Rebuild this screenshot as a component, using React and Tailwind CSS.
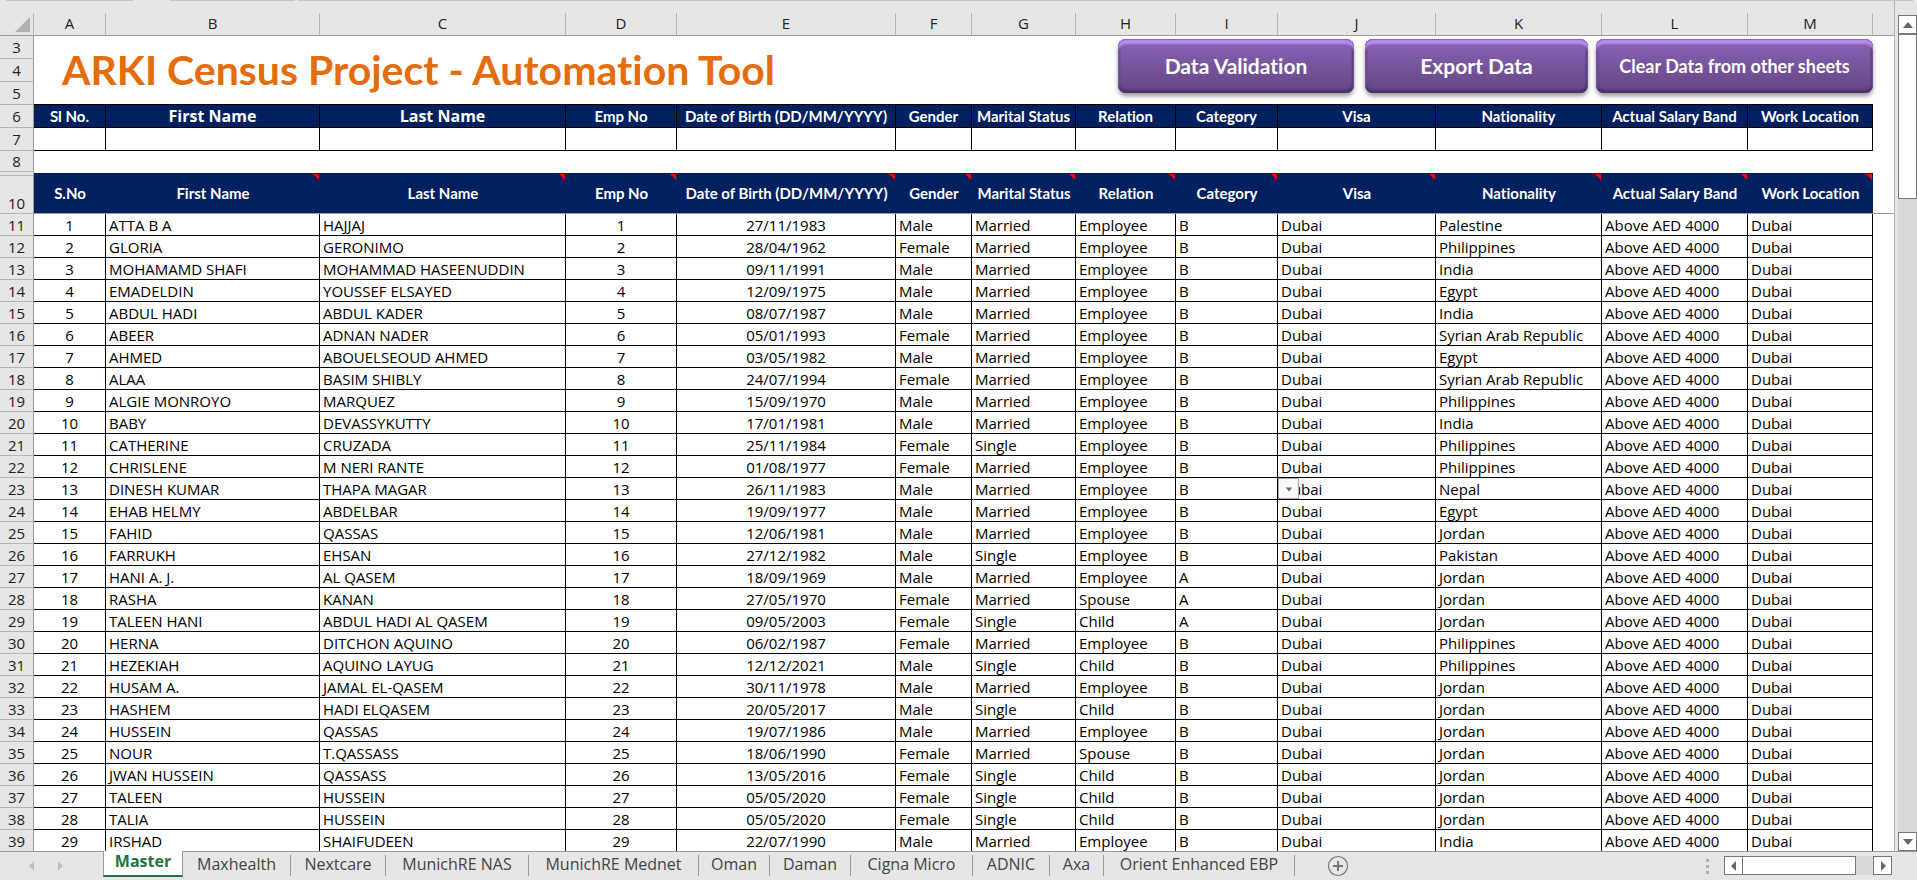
import clsx from "clsx";

const columns = [
  { letter: "A", label: "S.No", width: "w-[72px]" },
  { letter: "B", label: "First Name", width: "w-[214px]" },
  { letter: "C", label: "Last Name", width: "w-[246px]" },
  { letter: "D", label: "Emp No", width: "w-[111px]" },
  { letter: "E", label: "Date of Birth (DD/MM/YYYY)", width: "w-[219px]" },
  { letter: "F", label: "Gender", width: "w-[76px]" },
  { letter: "G", label: "Marital Status", width: "w-[104px]" },
  { letter: "H", label: "Relation", width: "w-[100px]" },
  { letter: "I", label: "Category", width: "w-[102px]" },
  { letter: "J", label: "Visa", width: "w-[158px]" },
  { letter: "K", label: "Nationality", width: "w-[166px]" },
  { letter: "L", label: "Actual Salary Band", width: "w-[146px]" },
  { letter: "M", label: "Work Location", width: "w-[125px]" },
];

// first name, last name, date of birth, gender, marital status, relation, category, nationality
const members = [
  ["ATTA B A", "HAJJAJ", "27/11/1983", "Male", "Married", "Employee", "B", "Palestine"],
  ["GLORIA", "GERONIMO", "28/04/1962", "Female", "Married", "Employee", "B", "Philippines"],
  ["MOHAMAMD SHAFI", "MOHAMMAD HASEENUDDIN", "09/11/1991", "Male", "Married", "Employee", "B", "India"],
  ["EMADELDIN", "YOUSSEF ELSAYED", "12/09/1975", "Male", "Married", "Employee", "B", "Egypt"],
  ["ABDUL HADI", "ABDUL KADER", "08/07/1987", "Male", "Married", "Employee", "B", "India"],
  ["ABEER", "ADNAN NADER", "05/01/1993", "Female", "Married", "Employee", "B", "Syrian Arab Republic"],
  ["AHMED", "ABOUELSEOUD AHMED", "03/05/1982", "Male", "Married", "Employee", "B", "Egypt"],
  ["ALAA", "BASIM SHIBLY", "24/07/1994", "Female", "Married", "Employee", "B", "Syrian Arab Republic"],
  ["ALGIE MONROYO", "MARQUEZ", "15/09/1970", "Male", "Married", "Employee", "B", "Philippines"],
  ["BABY", "DEVASSYKUTTY", "17/01/1981", "Male", "Married", "Employee", "B", "India"],
  ["CATHERINE", "CRUZADA", "25/11/1984", "Female", "Single", "Employee", "B", "Philippines"],
  ["CHRISLENE", "M NERI RANTE", "01/08/1977", "Female", "Married", "Employee", "B", "Philippines"],
  ["DINESH KUMAR", "THAPA MAGAR", "26/11/1983", "Male", "Married", "Employee", "B", "Nepal"],
  ["EHAB HELMY", "ABDELBAR", "19/09/1977", "Male", "Married", "Employee", "B", "Egypt"],
  ["FAHID", "QASSAS", "12/06/1981", "Male", "Married", "Employee", "B", "Jordan"],
  ["FARRUKH", "EHSAN", "27/12/1982", "Male", "Single", "Employee", "B", "Pakistan"],
  ["HANI A. J.", "AL QASEM", "18/09/1969", "Male", "Married", "Employee", "A", "Jordan"],
  ["RASHA", "KANAN", "27/05/1970", "Female", "Married", "Spouse", "A", "Jordan"],
  ["TALEEN HANI", "ABDUL HADI AL QASEM", "09/05/2003", "Female", "Single", "Child", "A", "Jordan"],
  ["HERNA", "DITCHON AQUINO", "06/02/1987", "Female", "Married", "Employee", "B", "Philippines"],
  ["HEZEKIAH", "AQUINO LAYUG", "12/12/2021", "Male", "Single", "Child", "B", "Philippines"],
  ["HUSAM A.", "JAMAL EL-QASEM", "30/11/1978", "Male", "Married", "Employee", "B", "Jordan"],
  ["HASHEM", "HADI ELQASEM", "20/05/2017", "Male", "Single", "Child", "B", "Jordan"],
  ["HUSSEIN", "QASSAS", "19/07/1986", "Male", "Married", "Employee", "B", "Jordan"],
  ["NOUR", "T.QASSASS", "18/06/1990", "Female", "Married", "Spouse", "B", "Jordan"],
  ["JWAN HUSSEIN", "QASSASS", "13/05/2016", "Female", "Single", "Child", "B", "Jordan"],
  ["TALEEN", "HUSSEIN", "05/05/2020", "Female", "Single", "Child", "B", "Jordan"],
  ["TALIA", "HUSSEIN", "05/05/2020", "Female", "Single", "Child", "B", "Jordan"],
  ["IRSHAD", "SHAIFUDEEN", "22/07/1990", "Male", "Married", "Employee", "B", "India"],
];

const tabs = [
  { name: "Maxhealth", width: "w-[108px]" },
  { name: "Nextcare", width: "w-[95px]" },
  { name: "MunichRE NAS", width: "w-[143px]" },
  { name: "MunichRE Mednet", width: "w-[170px]" },
  { name: "Oman", width: "w-[71px]" },
  { name: "Daman", width: "w-[81px]" },
  { name: "Cigna Micro", width: "w-[122px]" },
  { name: "ADNIC", width: "w-[77px]" },
  { name: "Axa", width: "w-[54px]" },
  { name: "Orient Enhanced EBP", width: "w-[191px]" },
];

function Arrow({ points, className = "size-[10px]" }) {
  return (
    <svg viewBox="0 0 10 10" className={className} aria-hidden="true">
      <polygon points={points} fill="currentColor" />
    </svg>
  );
}

function RowNumber({ children, className }) {
  return (
    <th
      scope="row"
      className={clsx(
        "border-r border-b border-r-[#9b9b9b] border-b-[#b5b5b5] bg-[#e6e6e6] p-0 text-center text-[15px] leading-5 font-normal text-[#222]",
        className
      )}
    >
      {children}
    </th>
  );
}

function MacroButton({ children, className }) {
  return (
    <button
      type="button"
      className={clsx(
        "h-[54px] rounded-lg bg-linear-to-b from-[#8a63b8] to-[#644683] font-[Lato,sans-serif] font-bold text-white shadow-[inset_0_1px_1px_#8a63b8,inset_0_5px_2px_#b88cec,inset_0_-3px_3px_#4b3366,inset_2px_0_2px_#6d4b92,inset_-2px_0_2px_#563a75,0_3px_4px_rgba(0,0,0,0.4)]",
        className
      )}
    >
      {children}
    </button>
  );
}

function MemberRow({ member, index }) {
  const [firstName, lastName, dob, gender, marital, relation, category, nationality] = member;
  const no = index + 1;
  const cells = [no, firstName, lastName, no, dob, gender, marital, relation, category, "Dubai", nationality, "Above AED 4000", "Dubai"];

  return (
    <tr>
      <RowNumber className="h-[22px]">{index + 11}</RowNumber>
      {cells.map((value, i) => (
        <td
          key={columns[i].letter}
          className={clsx(
            "relative h-[22px] border-r border-b border-black p-0 text-[15px] leading-5 whitespace-nowrap",
            [0, 3, 4].includes(i) ? "text-center" : "pl-[3px]"
          )}
        >
          {value}
          {no === 13 && columns[i].letter === "J" && (
            <button
              type="button"
              aria-label="Choose visa"
              className="absolute top-0 left-0 flex h-[21px] w-[21px] items-center justify-center border border-[#ababab] bg-[#f8f8f8] text-[#666]"
            >
              <Arrow points="1,3 9,3 5,8" className="size-2" />
            </button>
          )}
        </td>
      ))}
      <td></td>
    </tr>
  );
}

function Sheet() {
  return (
    <table className="w-full table-fixed border-separate border-spacing-0 bg-white text-black">
      <colgroup>
        <col className="w-[34px]" />
        {columns.map((col) => (
          <col key={col.letter} className={col.width} />
        ))}
        <col />
      </colgroup>
      <thead>
        <tr className="bg-[#e6e6e6]">
          <td className="h-[35px] border-b border-[#9b9b9b] p-0 align-bottom">
            <div className="flex h-[22px] items-start justify-end border-r border-[#b5b5b5] pt-1 pr-[3px]">
              <svg viewBox="0 0 15 15" className="size-[15px]" aria-hidden="true">
                <polygon points="15,0 15,15 0,15" fill="#b1b1b1" />
              </svg>
            </div>
          </td>
          {columns.map((col) => (
            <th
              key={col.letter}
              scope="col"
              className="h-[35px] border-b border-[#9b9b9b] p-0 align-bottom text-[15px] font-normal text-[#222]"
            >
              <div className="h-[22px] border-r border-[#b5b5b5] leading-5">{col.letter}</div>
            </th>
          ))}
          <td className="border-b border-[#9b9b9b]"></td>
        </tr>
      </thead>
      <tbody>
        <tr>
          <RowNumber className="h-[23px]">3</RowNumber>
          <td colSpan={13} rowSpan={3} className="h-[69px] border-b border-black p-0">
            <div className="flex h-[68px] items-center justify-between pl-7">
              <h1 className="font-[Lato,sans-serif] text-[41px] leading-[46px] font-bold whitespace-nowrap text-[#e46c0a]">
                ARKI Census Project - Automation Tool
              </h1>
              <div className="flex h-[62px] items-start">
                <MacroButton className="mr-[11px] w-[236px] text-[21px]">Data Validation</MacroButton>
                <MacroButton className="mr-2 w-[223px] text-[21px]">Export Data</MacroButton>
                <MacroButton className="w-[277px] text-[18px]">Clear Data from other sheets</MacroButton>
              </div>
            </div>
          </td>
        </tr>
        <tr>
          <RowNumber className="h-[23px]">4</RowNumber>
        </tr>
        <tr>
          <RowNumber className="h-[23px]">5</RowNumber>
        </tr>
        <tr>
          <RowNumber className="h-[23px]">6</RowNumber>
          {columns.map((col, i) => (
            <th
              key={col.letter}
              className={clsx(
                "h-[23px] border-r border-b border-black bg-[#002060] p-0 leading-5 font-bold whitespace-nowrap text-white",
                i === 1 || i === 2 ? "text-[16px]" : "font-[Lato,sans-serif] text-[15px]"
              )}
            >
              {i === 0 ? "Sl No." : col.label}
            </th>
          ))}
          <td></td>
        </tr>
        <tr>
          <RowNumber className="h-[23px]">7</RowNumber>
          {columns.map((col) => (
            <td key={col.letter} className="h-[23px] border-r border-b border-black p-0"></td>
          ))}
          <td></td>
        </tr>
        <tr>
          <RowNumber className="h-[21px]">8</RowNumber>
          <td colSpan={14}></td>
        </tr>
        {/* row 9 is collapsed, its strip carries the comment markers */}
        <tr>
          <RowNumber className="h-1" />
          {columns.map((col, i) => (
            <td key={col.letter} className="relative h-1 border-t border-white bg-[#002060] p-0">
              {i > 0 && (
                <svg viewBox="0 0 6 6" className="absolute top-[1px] right-[1px] size-[6px]" aria-hidden="true">
                  <polygon points="0,0 6,0 6,6" fill="#f00" />
                </svg>
              )}
            </td>
          ))}
          <td></td>
        </tr>
        <tr>
          <RowNumber className="h-[38px] align-bottom">10</RowNumber>
          {columns.map((col) => (
            <th
              key={col.letter}
              className="h-[38px] border-b border-[#9b9b9b] bg-[#002060] p-0 pb-[3px] font-[Lato,sans-serif] text-[15px] leading-5 font-bold whitespace-nowrap text-white"
            >
              {col.label}
            </th>
          ))}
          <td className="border-b border-[#9b9b9b]"></td>
        </tr>
        {members.map((member, index) => (
          <MemberRow key={index} member={member} index={index} />
        ))}
      </tbody>
    </table>
  );
}

function VerticalScrollbar() {
  return (
    <div className="flex w-[19px] shrink-0 flex-col bg-[#d9d9d9] text-[#666]">
      <div className="h-[14px] bg-[#e6e6e6]"></div>
      <button type="button" aria-label="Scroll up" className="flex h-[19px] items-center justify-center border border-[#777] bg-white">
        <Arrow points="0,8 5,2 10,8" />
      </button>
      <div className="h-[165px] border border-[#777] bg-white"></div>
      <button type="button" aria-label="Scroll down" className="mt-auto flex h-[19px] items-center justify-center border border-[#777] bg-white">
        <Arrow points="0,2 5,8 10,2" />
      </button>
    </div>
  );
}

function SheetTabs() {
  return (
    <footer className="flex h-[29px] shrink-0 bg-[#e6e6e6]">
      <div className="flex w-[103px] shrink-0 items-center gap-5 border-t border-[#9b9b9b] pl-[26px] text-[#c0c0c0]">
        <button type="button" aria-label="Previous sheet">
          <Arrow points="8,0 8,10 3,5" />
        </button>
        <button type="button" aria-label="Next sheet">
          <Arrow points="2,0 2,10 7,5" />
        </button>
      </div>
      <button
        type="button"
        className="h-[26px] w-20 shrink-0 border-r border-b-2 border-l border-r-[#9b9b9b] border-b-[#217346] border-l-[#9b9b9b] bg-white pb-1 text-[16px] leading-5 font-bold text-[#217346]"
      >
        Master
      </button>
      <div className="flex flex-1 items-start border-t border-[#9b9b9b]">
        {tabs.map((tab) => (
          <button
            key={tab.name}
            type="button"
            className={clsx("mt-[3px] h-[21px] shrink-0 border-r border-[#9b9b9b] pb-1 text-[16px] leading-4 whitespace-nowrap text-[#444]", tab.width)}
          >
            {tab.name}
          </button>
        ))}
        <button type="button" aria-label="New sheet" className="mt-[3px] ml-8 text-[#777]">
          <svg viewBox="0 0 22 22" className="size-[22px]" fill="none" stroke="currentColor" aria-hidden="true">
            <circle cx="11" cy="11" r="9.5" strokeWidth="1.2" />
            <path d="M11 6v10M6 11h10" strokeWidth="2" />
          </svg>
        </button>
        <div className="mt-[7px] mr-[15px] ml-auto flex flex-col gap-[3px]">
          <span className="size-[3px] bg-[#b0b0b0]"></span>
          <span className="size-[3px] bg-[#b0b0b0]"></span>
          <span className="size-[3px] bg-[#b0b0b0]"></span>
        </div>
        <div className="mt-1 mr-[25px] flex h-[19px] bg-[#d9d9d9] text-[#666]">
          <button type="button" aria-label="Scroll left" className="flex w-[19px] items-center justify-center border border-[#777] bg-white">
            <Arrow points="7,0 7,10 2,5" />
          </button>
          <div className="mr-[17px] w-[113px] border border-l-0 border-[#777] bg-white"></div>
          <button type="button" aria-label="Scroll right" className="flex w-[19px] items-center justify-center border border-[#777] bg-white">
            <Arrow points="3,0 3,10 8,5" />
          </button>
        </div>
      </div>
    </footer>
  );
}

export default function App() {
  return (
    <div className="flex h-screen flex-col overflow-hidden bg-[#e6e6e6] font-['Open_Sans',sans-serif] [font-variant-ligatures:none]">
      <div className="flex h-px shrink-0 pr-1 pl-[6px]">
        <div className="mr-[37px] w-[127px] bg-[#c6c6c6]"></div>
        <div className="mr-[3px] w-[125px] bg-[#c6c6c6]"></div>
        <div className="flex-1 bg-[#c6c6c6]"></div>
      </div>
      <main className="flex min-h-0 flex-1">
        <div className="mr-[3px] min-w-0 flex-1 overflow-hidden border-r border-[#b5b5b5]">
          <Sheet />
        </div>
        <VerticalScrollbar />
      </main>
      <SheetTabs />
    </div>
  );
}
